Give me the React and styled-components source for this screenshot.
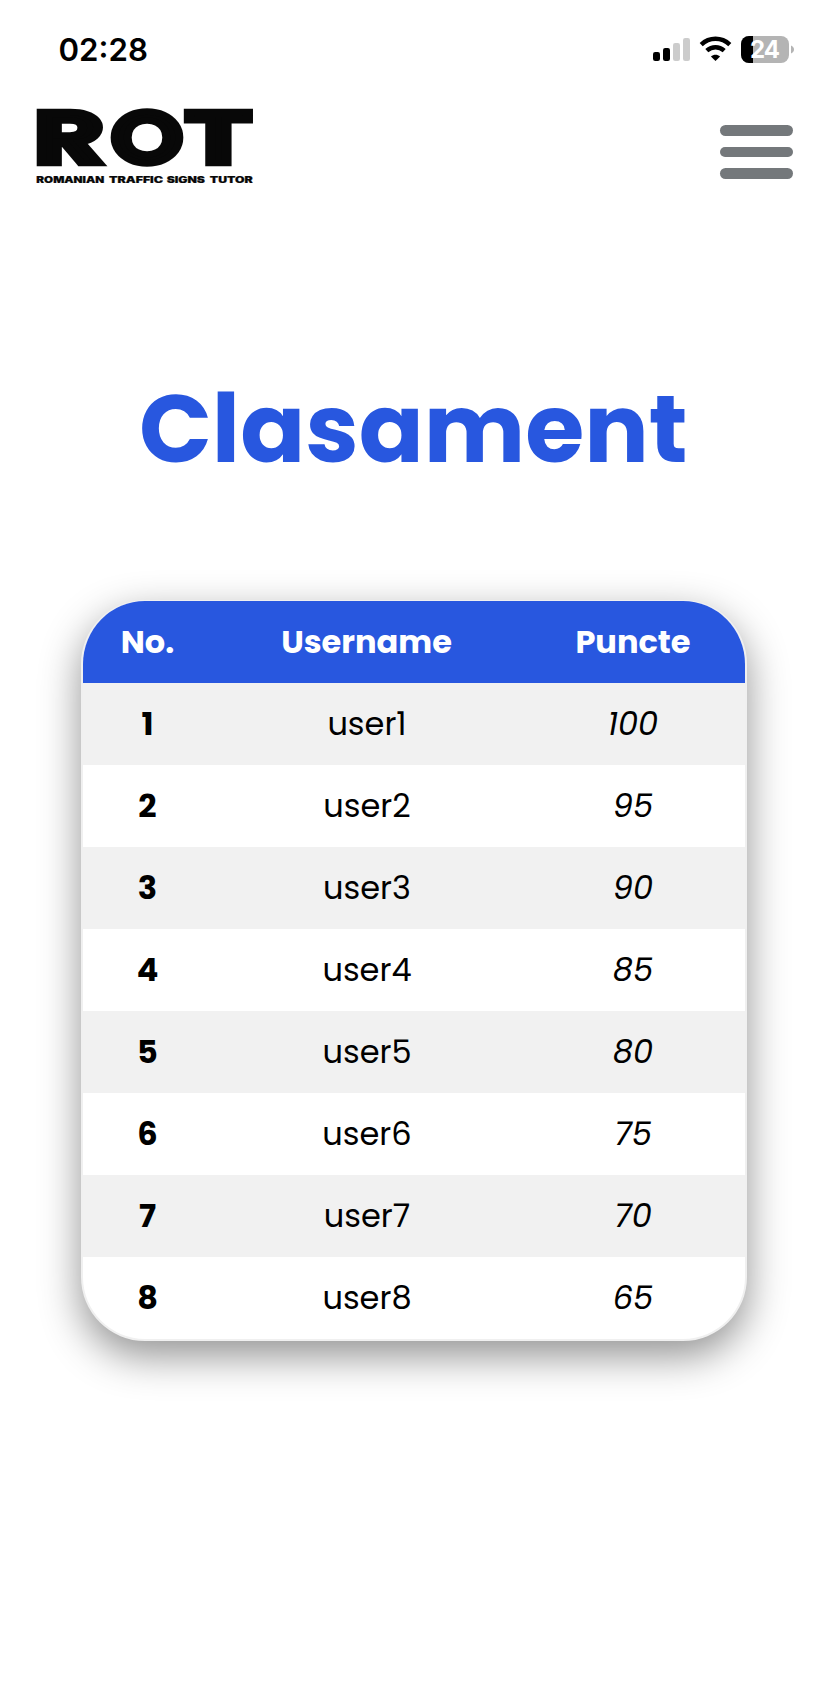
import React from 'react';
import styled, { createGlobalStyle } from 'styled-components';

const GlobalStyle = createGlobalStyle`
  * { box-sizing: border-box; }
  body {
    margin: 0;
    background: #fff;
    color: #000;
    font-family: Poppins, Inter, 'Liberation Sans', sans-serif;
  }
`;

const Page = styled.div`
  width: 828px;
  height: 1682px;
  overflow: hidden;
  background: #fff;
`;

const StatusBar = styled.div`
  display: flex;
  justify-content: space-between;
  align-items: center;
  height: 100px;
  padding: 0 34px 0 58.5px;
`;

const Time = styled.span`
  font: 600 31.2px/40px Inter, sans-serif;
`;

const StatusIcons = styled.svg`
  display: block;
  width: 142px;
  height: 28px;
`;

const Header = styled.header`
  display: flex;
  justify-content: space-between;
  align-items: flex-start;
  height: 100px;
  padding: 0 35.5px 0 36px;
`;

const Logo = styled.svg`
  display: block;
  width: 218px;
  height: 90px;
  overflow: visible;
  fill: #080808;
  stroke: #080808;
`;

const MenuButton = styled.button`
  display: flex;
  flex-direction: column;
  gap: 11px;
  width: 73px;
  margin-top: 25px;
  padding: 0;
  border: 0;
  background: none;
`;

const MenuBar = styled.span`
  width: 100%;
  height: 10.7px;
  border-radius: 6px;
  background: #74787b;
`;

const Title = styled.h1`
  margin: 158px 0 0;
  padding-right: 1.5px;
  height: 242px;
  color: #2857df;
  font-size: 95.8px;
  font-weight: 700;
  line-height: 141px;
  text-align: center;
`;

const Card = styled.main`
  width: 666px;
  height: 741px;
  margin: 0 81px;
  border: 2px solid #f0f0f0;
  border-top-width: 1px;
  border-radius: 64px;
  overflow: hidden;
  background: #fff;
  box-shadow: 0 15px 40px rgba(0, 0, 0, 0.43);
`;

const Table = styled.table`
  width: 662px;
  table-layout: fixed;
  border-collapse: collapse;
  font-size: 32px;
  text-align: center;
`;

const HeadCell = styled.th`
  width: ${(p) => p.$width}px;
  height: 82px;
  padding: 0;
  background: #2857df;
  color: #fff;
  font-weight: 700;
`;

const Row = styled.tr`
  height: 82px;
  &:nth-child(odd) { background: #f1f1f1; }
`;

const Cell = styled.td`
  padding: 0;
`;

const Username = styled(Cell)`
  padding-left: 1px;
`;

const Rank = styled(Cell)`
  font-weight: 700;
`;

const Points = styled(Cell)`
  font-style: italic;
`;

const points = [100, 95, 90, 85, 80, 75, 70, 65];

const letters = [
  { text: 'R', x: -2.1, width: 70.5 },
  { text: 'O', x: 75.4, width: 71 },
  { text: 'T', x: 149.2, width: 66.4 },
];

const tagline = [
  { text: 'ROMANIAN', x: 0.3, width: 68 },
  { text: 'TRAFFIC', x: 73, width: 54 },
  { text: 'SIGNS', x: 130.7, width: 38.3 },
  { text: 'TUTOR', x: 173.8, width: 43 },
];

export default function App() {
  return (
    <Page>
      <GlobalStyle />
      <StatusBar>
        <Time>02:28</Time>
        <StatusIcons viewBox="0 0 142 28">
          <rect x="1" y="16" width="7" height="9" rx="2.2" />
          <rect x="11" y="12" width="7" height="13" rx="2.2" />
          <rect x="21" y="7" width="7" height="18" rx="2.2" fill="#ccc" />
          <rect x="31" y="2" width="7" height="23" rx="2.2" fill="#ccc" />
          <g fill="none" stroke="#000" strokeWidth="4.5">
            <path d="M49.2 8.6C57.5 .9 69.5 .9 77.8 8.6" />
            <path d="M54.8 14.6C60 10 67 10 72.2 14.6" />
          </g>
          <path d="M63.5 25l-4.6-4.6c2.7-2.3 6.5-2.3 9.2 0z" />
          <defs>
            <clipPath id="battery"><rect x="89" width="48" height="27" rx="8" /></clipPath>
          </defs>
          <g clipPath="url(#battery)">
            <rect x="89" width="48" height="27" fill="#b4b4b4" />
            <rect x="89" width="12" height="27" />
          </g>
          <path d="M139 9.5c4 1.5 4 6.5 0 8z" fill="#b4b4b4" />
          <text x="98" y="22" fill="#fff" fontFamily="Inter, sans-serif" fontSize="24" fontWeight="700" textLength="30">24</text>
        </StatusIcons>
      </StatusBar>
      <Header>
        <Logo viewBox="0 0 218 90">
          <g fontFamily="Poppins, sans-serif" fontWeight="600" fontSize="72" strokeWidth="6.4">
            {letters.map((l) => (
              <text key={l.text} x={l.x} y="62.6" textLength={l.width} lengthAdjust="spacingAndGlyphs">{l.text}</text>
            ))}
          </g>
          <g fontFamily="Inter, sans-serif" fontWeight="900" fontSize="8.8" strokeWidth="0.2">
            {tagline.map((w) => (
              <text key={w.text} x={w.x} y="82.5" textLength={w.width} lengthAdjust="spacingAndGlyphs">{w.text}</text>
            ))}
          </g>
        </Logo>
        <MenuButton aria-label="Meniu">
          <MenuBar />
          <MenuBar />
          <MenuBar />
        </MenuButton>
      </Header>
      <Title>Clasament</Title>
      <Card>
        <Table>
          <thead>
            <tr>
              <HeadCell $width={129}>No.</HeadCell>
              <HeadCell $width={309}>Username</HeadCell>
              <HeadCell $width={224}>Puncte</HeadCell>
            </tr>
          </thead>
          <tbody>
            {points.map((value, i) => (
              <Row key={value}>
                <Rank>{i + 1}</Rank>
                <Username>user{i + 1}</Username>
                <Points>{value}</Points>
              </Row>
            ))}
          </tbody>
        </Table>
      </Card>
    </Page>
  );
}
